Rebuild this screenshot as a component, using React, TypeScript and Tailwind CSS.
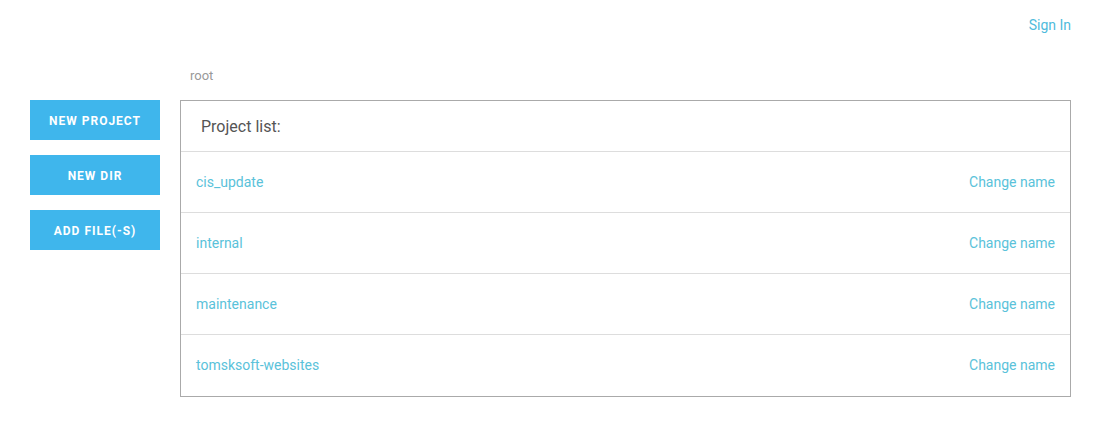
const projects = ["cis_update", "internal", "maintenance", "tomsksoft-websites"];

const actions = ["New project", "New dir", "Add file(-s)"];

export default function App() {
  return (
    <div className="min-h-[428px] bg-white font-['Roboto',sans-serif]">
      {/* Top bar */}
      <div className="flex justify-end px-[30px] pt-[15px] h-[60px]">
        <a className="text-[14px] leading-[20px] text-[#4fbbdc] cursor-pointer">Sign In</a>
      </div>

      <div className="flex gap-5 pl-[30px] pr-[30px]">
        {/* Sidebar */}
        <div className="flex flex-col gap-[15px] w-[130px] pt-10 shrink-0">
          {actions.map((label) => (
            <button
              key={label}
              className="h-10 w-full pt-[2px] bg-[#3fb6ec] text-white uppercase text-[12px] font-bold tracking-[1px]"
            >
              {label}
            </button>
          ))}
        </div>

        {/* Main */}
        <div className="flex-1">
          <div className="h-10 pl-[10px] pt-[7px] text-[13px] leading-[18px] text-[#999]">root</div>
          <div className="border border-[#aaa]">
            <div className="h-[51px] flex items-center pt-[2px] px-5 text-[16px] text-[#555] border-b border-[#ddd]">
              Project list:
            </div>
            {projects.map((name, i) => (
              <div
                key={name}
                className={`h-[61px] flex items-center justify-between px-[15px] text-[14px] text-[#5ac2da] ${
                  i < projects.length - 1 ? "border-b border-[#ddd]" : ""
                }`}
              >
                <a className="cursor-pointer">{name}</a>
                <a className="cursor-pointer">Change name</a>
              </div>
            ))}
          </div>
        </div>
      </div>
    </div>
  );
}
